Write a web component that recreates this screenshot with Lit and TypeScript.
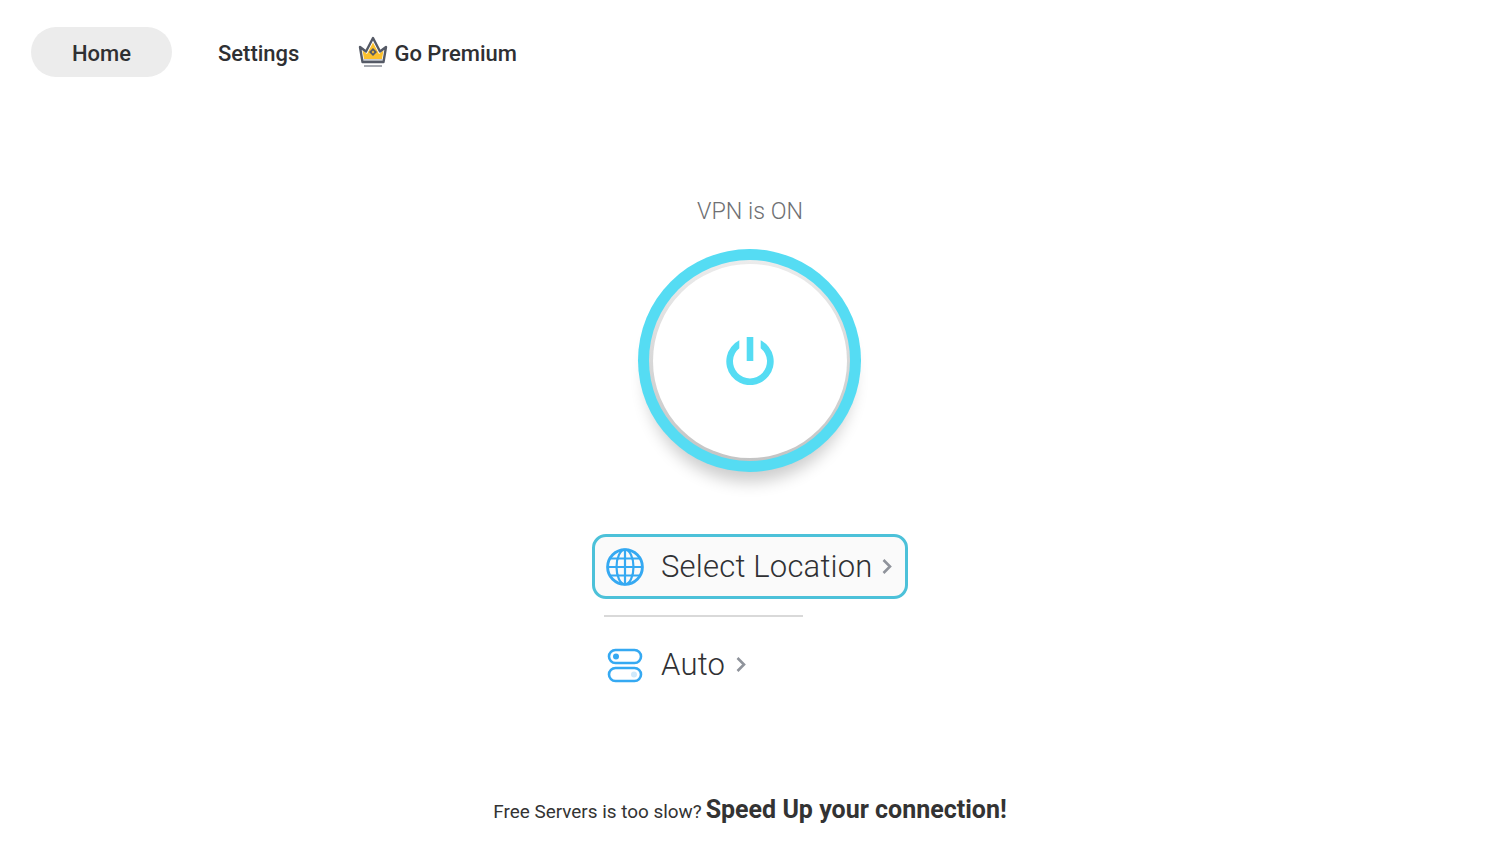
import { LitElement, html, css } from "lit";
import { customElement } from "lit/decorators.js";

const chevron = html`<svg class="chev" width="12" height="18" viewBox="0 0 12 18"><path d="M2.5 2 L9 8.5 L2.5 15" fill="none" stroke="#8f939b" stroke-width="2.6"/></svg>`;

@customElement("app-root")
export class AppRoot extends LitElement {
  static styles = css`
    :host { display: block; width: 1500px; height: 843px; background: #fff; overflow: hidden; font-family: Roboto, sans-serif; color: #2f3033; }
    .nav { display: flex; align-items: center; height: 50px; padding: 27px 0 0 31px; }
    .tab { font-size: 22px; font-weight: 500; line-height: 50px; height: 50px; padding: 2px 0 0; box-sizing: border-box; }
    .home { width: 141px; text-align: center; background: #ececec; border-radius: 25px; }
    .settings { margin-left: 46px; }
    .premium { margin-left: 59px; display: flex; align-items: center; gap: 6px; padding-top: 4px; }
    .crown { margin-top: -4px; }
    .main { display: flex; flex-direction: column; align-items: center; }
    .status { margin-top: 118px; height: 32px; font-size: 23.3px; font-weight: 300; line-height: 32px; color: #6f7073; }
    .power { margin: 22px 1px 0 0; width: 223px; height: 223px; border-radius: 50%; background: #55dcf3; display: flex; align-items: center; justify-content: center; box-shadow: 0 18px 16px -8px rgba(0,0,0,.2); }
    .inner { width: 201px; height: 201px; border-radius: 50%; background: linear-gradient(180deg, #ececec 0%, #c4c4c4 100%); display: flex; align-items: center; justify-content: center; }
    .face { width: 194px; height: 194px; border-radius: 50%; background: #fff; display: flex; align-items: center; justify-content: center; }
    .select { margin-top: 62px; width: 316px; height: 65px; box-sizing: border-box; border: 3px solid #4cc1d9; border-radius: 14px; background: #fafafa; display: flex; align-items: center; padding-left: 11px; }
    .label { font-size: 31px; font-weight: 300; letter-spacing: 0.2px; color: #303134; margin-left: 17px; line-height: 40px; }
    .select .chev { margin-left: 8px; }
    .list { width: 316px; box-sizing: border-box; padding-left: 12px; }
    .divider { margin-top: 16px; width: 199px; height: 2px; background: #d9d9d9; }
    .auto { margin-top: 15px; height: 66px; display: flex; align-items: center; padding-left: 3px; }
    .auto .label { margin-left: 18px; }
    .auto .chev { margin-left: 10px; }
    .footer { margin-top: 97px; display: flex; align-items: baseline; gap: 4px; font-size: 18.9px; color: #333; }
    .footer b { font-size: 25px; font-weight: 700; }
  `;

  render() {
    return html`
      <div class="nav">
        <div class="tab home">Home</div>
        <div class="tab settings">Settings</div>
        <div class="tab premium">
          <svg class="crown" width="30" height="32" viewBox="0 0 30 32">
            <path d="M4.5 14.5 L9 18 L15 6.5 L21 18 L25.5 14.5 L24 23 H6 Z" fill="#fbc02d"/>
            <path d="M5.5 23 H24.5 V25 H5.5 Z" fill="#c9ccd2"/>
            <path d="M2 11 L8 15.5 L15 2 L22 15.5 L28 11 L25.5 26 H4.5 Z" fill="none" stroke="#555a66" stroke-width="2.4" stroke-linejoin="round"/>
            <path d="M15 12 L19 16 L15 20 L11 16 Z" fill="#555a66"/>
            <path d="M15 14.6 L16.4 16 L15 17.4 L13.6 16 Z" fill="#fbc02d"/>
            <rect x="6" y="29" width="18" height="2" fill="#a6a9b0"/>
          </svg>
          Go Premium
        </div>
      </div>
      <div class="main">
        <div class="status">VPN is ON</div>
        <div class="power"><div class="inner"><div class="face">
          <svg width="48" height="48" viewBox="0 0 48 48">
            <path d="M13.3 3.3 A23.7 23.7 0 1 0 34.7 3.3 V11.2 A17 17 0 1 1 13.3 11.2 Z" fill="#55dcf3"/>
            <rect x="20.7" y="0" width="6.6" height="24" fill="#55dcf3"/>
          </svg>
        </div></div></div>
        <div class="select">
          <svg width="38" height="38" viewBox="0 0 38 38" fill="none" stroke="#35a9f2">
            <circle cx="19" cy="19" r="17.4" stroke-width="2.9"/>
            <ellipse cx="19" cy="19" rx="8.5" ry="17.4" stroke-width="2.2"/>
            <path d="M19 1.6 V36.4 M1.6 19 H36.4 M5 10.5 H33 M5 27.5 H33" stroke-width="2.2"/>
          </svg>
          <span class="label">Select Location</span>
          ${chevron}
        </div>
        <div class="list">
          <div class="divider"></div>
          <div class="auto">
            <svg width="36" height="36" viewBox="0 0 36 36" fill="none" stroke="#35a9f2" stroke-width="2.6">
              <rect x="2" y="3" width="32" height="13" rx="6.5"/>
              <rect x="2" y="21" width="32" height="13" rx="6.5"/>
              <circle cx="9" cy="9.5" r="3" fill="#35a9f2" stroke="none"/>
              <circle cx="27" cy="27.5" r="3" fill="#cfe9fb" stroke="none"/>
            </svg>
            <span class="label">Auto</span>
            ${chevron}
          </div>
        </div>
        <div class="footer"><span>Free Servers is too slow?</span><b>Speed Up your connection!</b></div>
      </div>
    `;
  }
}
